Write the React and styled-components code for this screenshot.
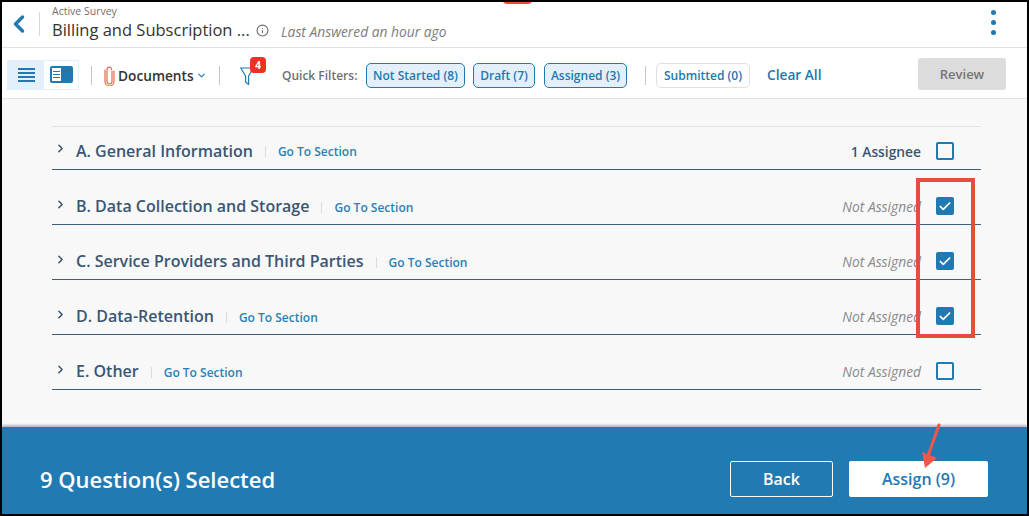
import styled, { createGlobalStyle } from 'styled-components';
import { Info, ChevronDown, ChevronRight, ChevronLeft, Check } from 'lucide-react';

const GlobalStyle = createGlobalStyle`
html, body {
  margin: 0;
  padding: 0;
  background: #000;
}
* {
  box-sizing: border-box;
}
`

const Page = styled.div`
position: relative;
width: 1029px;
height: 516px;
border-style: solid;
border-color: #000;
border-width: 2px 2px 2px 2px;
background: #f8f8f8;
display: flex;
flex-direction: column;
font-family: "Open Sans", sans-serif;
overflow: hidden;
`

const Header = styled.div`
height: 46px;
flex: none;
background: #fff;
border-bottom: 1px solid #dfe3e6;
display: flex;
align-items: center;
padding: 0 31px 0 10px;
`
const BackButton = styled.div`
width: 28px;
height: 24px;
margin-top: -2px;
color: #2079b0;
border-right: 1px solid #d5d8da;
display: flex;
align-items: center;
margin-right: 12px;
svg { margin-left: -7px; }
`
const TitleBlock = styled.div`
display: flex;
flex-direction: column;
width: 229px;
margin-top: -3px;
`
const Eyebrow = styled.div`
font-size: 10.5px;
line-height: 13px;
color: #6f6f6f;
`
const TitleRow = styled.div`
display: flex;
align-items: center;
gap: 6px;
color: #333;
font-size: 16.5px;
line-height: 22px;
margin-top: 1px;
white-space: nowrap;
svg { color: #6d6d6d; margin-top: 1px; flex: none; }
`
const LastAnswered = styled.div`
font-size: 13.8px;
font-style: italic;
color: #7c7c7c;
margin-top: 13px;
flex: 1;
`
const Kebab = styled.div`
display: flex;
flex-direction: column;
gap: 5px;
margin-top: -4px;
span {
  width: 5px;
  height: 5px;
  border-radius: 50%;
  background: #2079b0;
}
`

const Toolbar = styled.div`
height: 51px;
flex: none;
background: #fff;
border-bottom: 1px solid #e2e4e6;
display: flex;
align-items: center;
padding: 5px 21px 0 5px;
`
const ViewToggle = styled.div`
display: flex;
height: 30px;
margin-top: -2px;
border: 1px solid #e4eff8;
`
const ViewButton = styled.div`
width: ${p => p.$w}px;
background: ${p => p.$active ? '#e3f0fb' : '#fff'};
display: flex;
align-items: center;
justify-content: center;
`
const Divider = styled.div`
width: 1px;
height: 19px;
background: #c4c6c8;
margin: ${p => p.$margin};
`
const DocLink = styled.div`
display: flex;
align-items: center;
width: 103px;
font-size: 13.7px;
font-weight: 600;
color: #333;
svg.clip { color: #e8694d; margin-right: 3px; flex: none; }
svg.caret { color: #2079b0; margin-left: 2px; flex: none; }
`
const FilterIcon = styled.div`
position: relative;
width: 20px;
height: 20px;
margin-right: 22px;
`
const Badge = styled.span`
position: absolute;
top: -9px;
left: 10px;
width: 16px;
height: 16px;
border-radius: 4px;
background: #ee3124;
color: #fff;
font-size: 10px;
font-weight: 700;
line-height: 16px;
text-align: center;
`
const FilterLabel = styled.span`
width: 84px;
font-size: 12px;
font-weight: 600;
color: #6f6f6f;
white-space: nowrap;
`
const Chip = styled.div`
width: ${p => p.$w}px;
height: 25px;
margin-right: ${p => p.$mr}px;
border-radius: 5px;
display: flex;
align-items: center;
justify-content: center;
font-size: 12px;
font-weight: 600;
color: #2079b0;
background: ${p => p.$active ? '#e3f0fb' : '#fff'};
border: 1px solid ${p => p.$active ? '#2079b0' : '#e0e0e0'};
white-space: nowrap;
`
const ClearAll = styled.span`
font-size: 13.7px;
font-weight: 600;
color: #2079b0;
margin-left: 17px;
flex: 1;
margin-top: -2px;
`
const ReviewButton = styled.div`
width: 88px;
height: 32px;
margin-top: -4px;
background: #dcdcdc;
border-radius: 3px;
color: #757575;
font-size: 13px;
font-weight: 600;
display: flex;
align-items: center;
justify-content: center;
`

const Content = styled.div`
flex: 1;
padding: 27px 46px 0 50px;
`
const SectionList = styled.div`
border-top: 1px solid #e3e3e3;
`
const SectionRow = styled.div`
height: 55px;
display: flex;
align-items: center;
padding: 18px 27px 0 0;
border-bottom: 1px solid #3d5d7d;
&:first-child { height: 43px; padding-top: 5px; }
`
const RowChevron = styled.div`
width: 24px;
margin-top: -4px;
color: #2f4a66;
display: flex;
align-items: center;
padding-left: 2px;
`
const RowTitle = styled.span`
font-size: 16px;
font-weight: 600;
color: #3a5675;
white-space: nowrap;
`
const GoTo = styled.span`
font-size: 12px;
font-weight: 600;
color: #2a80b5;
margin-left: 12px;
margin-top: 2px;
padding-left: 13px;
position: relative;
flex: 1;
white-space: nowrap;
&::before {
  content: '';
  position: absolute;
  left: 0;
  top: 3px;
  height: 11px;
  width: 1px;
  background: #dcdcdc;
}
`
const Assignee = styled.span`
font-size: 13.8px;
font-weight: 600;
color: #3a5675;
margin-right: 15px;
margin-top: 2px;
`
const NotAssigned = styled.span`
font-size: 13.8px;
font-style: italic;
color: #8a8a8a;
margin-right: 15px;
`
const Box = styled.div`
width: 18px;
height: 18px;
border-radius: 2px;
border: 2px solid #2079b0;
background: ${p => p.$checked ? '#2079b0' : 'transparent'};
color: #fff;
display: flex;
align-items: center;
justify-content: center;
`

const Footer = styled.div`
height: 87px;
flex: none;
background: #227ab3;
box-shadow: 0 -2px 2px rgba(0,0,0,0.25);
display: flex;
align-items: center;
padding: 17px 39px 0 38px;
color: #fff;
`
const Selected = styled.div`
font-size: 22px;
font-weight: 600;
flex: 1;
`
const BackBtn = styled.div`
width: 103px;
height: 36px;
border: 1px solid #fff;
border-radius: 2px;
margin-right: 16px;
font-size: 16px;
font-weight: 600;
display: flex;
align-items: center;
justify-content: center;
`
const AssignBtn = styled.div`
width: 139px;
height: 36px;
background: #fff;
border-radius: 2px;
color: #227ab3;
font-size: 16px;
font-weight: 600;
display: flex;
align-items: center;
justify-content: center;
`

const TopTab = styled.div`
position: absolute;
top: -2px;
left: 501px;
width: 29px;
height: 4px;
background: #ee4a35;
border-radius: 0 0 4px 4px;
`
const RedBox = styled.div`
position: absolute;
left: 914px;
top: 176px;
width: 59px;
height: 160px;
border: 4px solid #e84c3d;
`
const Arrow = styled.svg`
position: absolute;
left: 915px;
top: 420px;
`

const rows = [
	{ title: 'A. General Information', assignee: '1 Assignee', checked: false },
	{ title: 'B. Data Collection and Storage', checked: true },
	{ title: 'C. Service Providers and Third Parties', checked: true },
	{ title: 'D. Data-Retention', checked: true },
	{ title: 'E. Other', checked: false },
];

const App = () => {

	return(
		<Page>
		<GlobalStyle />
		<TopTab />
		<Header>
			<BackButton><ChevronLeft size={28} strokeWidth={3} /></BackButton>
			<TitleBlock>
				<Eyebrow>Active Survey</Eyebrow>
				<TitleRow>Billing and Subscription ... <Info size={13} /></TitleRow>
			</TitleBlock>
			<LastAnswered>Last Answered an hour ago</LastAnswered>
			<Kebab><span /><span /><span /></Kebab>
		</Header>

		<Toolbar>
			<ViewToggle>
				<ViewButton $w={36} $active>
					<svg width="17" height="14" viewBox="0 0 17 14" fill="#2079b0">
						<rect y="0" width="17" height="2" />
						<rect y="4" width="17" height="2" />
						<rect y="8" width="17" height="2" />
						<rect y="12" width="17" height="2" />
					</svg>
				</ViewButton>
				<ViewButton $w={34}>
					<svg width="23" height="17" viewBox="0 0 23 17">
						<rect width="23" height="17" rx="2" fill="#2079b0" />
						<rect x="2" y="2" width="9" height="13" fill="#fff" />
						<rect x="3" y="5" width="7" height="1" fill="#2079b0" />
						<rect x="3" y="8" width="7" height="1" fill="#2079b0" />
						<rect x="3" y="11" width="7" height="1" fill="#2079b0" />
					</svg>
				</ViewButton>
			</ViewToggle>
			<Divider $margin="0 12px 0 12px" />
			<DocLink>
				<svg className="clip" width="11" height="20" viewBox="0 0 11 20" fill="none" stroke="currentColor" strokeWidth="1.2" strokeLinecap="round">
					<path d="M8 5v10.5a2.5 2.5 0 0 1-5 0V3.5a2.3 2.3 0 0 1 4.6 0" />
					<path d="M10 5v10.5a4.5 4.5 0 0 1-9 0V4" />
				</svg>
				Documents
				<ChevronDown className="caret" size={11} strokeWidth={2.5} />
			</DocLink>
			<Divider $margin="0 20px 0 12px" />
			<FilterIcon>
				<svg width="14" height="20" viewBox="0 0 14 20" fill="none" stroke="#2079b0" strokeWidth="1.2" strokeLinejoin="round">
					<path d="M.7 2h12.6L8.6 10v8.5L5.6 16v-6z" />
				</svg>
				<Badge>4</Badge>
			</FilterIcon>
			<FilterLabel>Quick Filters:</FilterLabel>
			<Chip $active $w={99} $mr={8}>Not Started (8)</Chip>
			<Chip $active $w={62} $mr={9}>Draft (7)</Chip>
			<Chip $active $w={83} $mr={18}>Assigned (3)</Chip>
			<Divider $margin="0 10px 0 0" />
			<Chip $w={94} $mr={0}>Submitted (0)</Chip>
			<ClearAll>Clear All</ClearAll>
			<ReviewButton>Review</ReviewButton>
		</Toolbar>

		<Content>
			<SectionList>
				{rows.map(row => (
					<SectionRow key={row.title}>
						<RowChevron><ChevronRight size={13} strokeWidth={2.5} /></RowChevron>
						<RowTitle>{row.title}</RowTitle>
						<GoTo>Go To Section</GoTo>
						{row.assignee ? <Assignee>{row.assignee}</Assignee> : <NotAssigned>Not Assigned</NotAssigned>}
						<Box $checked={row.checked}>{row.checked && <Check size={15} strokeWidth={3} />}</Box>
					</SectionRow>
				))}
			</SectionList>
		</Content>

		<Footer>
			<Selected>9 Question(s) Selected</Selected>
			<BackBtn>Back</BackBtn>
			<AssignBtn>Assign (9)</AssignBtn>
		</Footer>

		<RedBox />
		<Arrow width="26" height="50" viewBox="0 0 26 50">
			<path d="M22 3 L11 34" stroke="#f0564a" strokeWidth="3" strokeLinecap="round" />
			<path d="M5 30 L8 46 L20 36 Z" fill="#f0564a" />
		</Arrow>
		</Page>
	)
}
export default App;
